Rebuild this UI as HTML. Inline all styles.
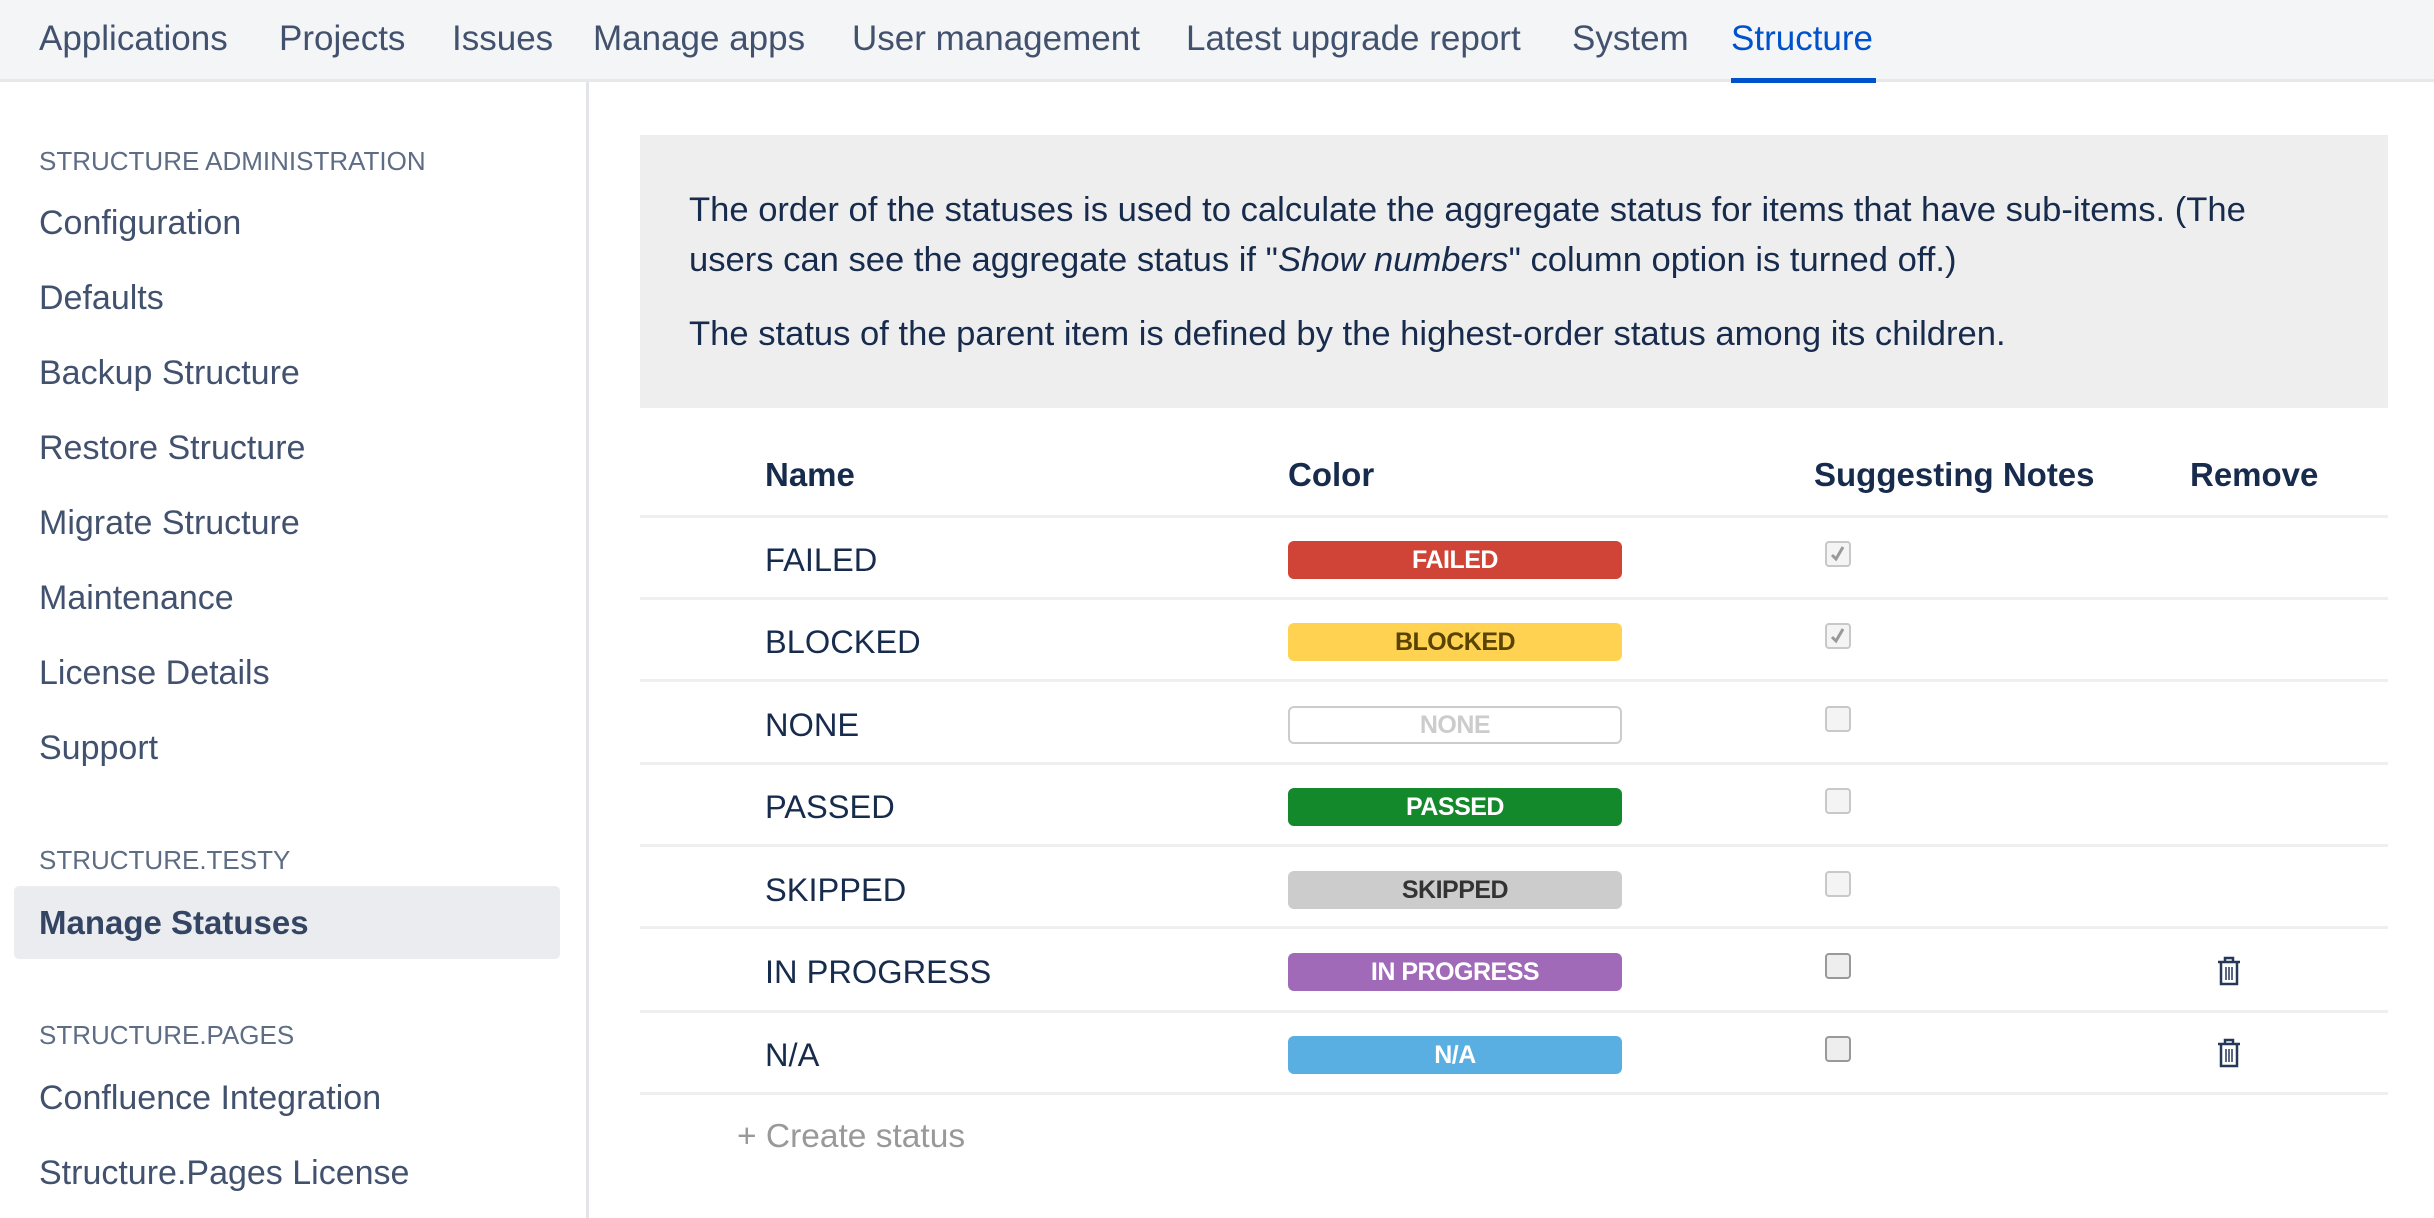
<!DOCTYPE html>
<html><head><meta charset="utf-8"><style>
*{margin:0;padding:0;box-sizing:border-box}
body{width:2434px;height:1218px;background:#fff;font-family:"Liberation Sans",sans-serif;position:relative;overflow:hidden;color:#172b4d}
.nav{position:absolute;left:0;top:0;width:2434px;height:82px;background:#f4f5f7;border-bottom:3px solid #e6e8ec}
.nav span{position:absolute;top:19px;font-size:35px;color:#42526e;white-space:nowrap}
.nav .act{color:#0052cc}
.uline{position:absolute;left:1731px;top:78px;width:145px;height:5px;background:#0052cc}
.side{position:absolute;left:586px;top:82px;width:3px;height:1136px;background:#e2e4e8}
.h{position:absolute;left:39px;font-size:26px;color:#5e6c84;white-space:nowrap}
.it{position:absolute;left:39px;font-size:34px;color:#42526e;white-space:nowrap}
.sel{position:absolute;left:14px;top:886px;width:546px;height:73px;background:#ebecf0;border-radius:5px}
.info{position:absolute;left:640px;top:135px;width:1748px;height:273px;background:#eeeeee}
.info p{position:absolute;left:49px;font-size:34.6px;color:#172b4d;white-space:nowrap}
.th{position:absolute;top:456px;font-size:33px;font-weight:bold;color:#172b4d;white-space:nowrap}
.ln{position:absolute;left:640px;width:1748px;height:3px;background:#efefef}
.nm{position:absolute;left:765px;font-size:32.6px;color:#172b4d;white-space:nowrap}
.bd{position:absolute;left:1288px;width:334px;height:38px;border-radius:6px;font-weight:bold;font-size:25px;text-align:center;line-height:38px;letter-spacing:-0.5px}
.cb{position:absolute;left:1825px;width:26px;height:26px;border:2px solid #c8c8c8;border-radius:4px;background:#f4f4f4}
.cb.d{border-color:#999;background:#eee}
.tr{position:absolute;left:2216px}
</style></head><body>
<div class="nav">
<span style="left:39px">Applications</span>
<span style="left:279px">Projects</span>
<span style="left:452px">Issues</span>
<span style="left:593px">Manage apps</span>
<span style="left:852px">User management</span>
<span style="left:1186px">Latest upgrade report</span>
<span style="left:1572px">System</span>
<span class="act" style="left:1731px">Structure</span>
<div class="uline"></div>
</div>
<div class="side"></div>
<div class="h" style="top:146px">STRUCTURE ADMINISTRATION</div>
<div class="it" style="top:204px">Configuration</div>
<div class="it" style="top:279px">Defaults</div>
<div class="it" style="top:354px">Backup Structure</div>
<div class="it" style="top:429px">Restore Structure</div>
<div class="it" style="top:504px">Migrate Structure</div>
<div class="it" style="top:579px">Maintenance</div>
<div class="it" style="top:654px">License Details</div>
<div class="it" style="top:729px">Support</div>
<div class="h" style="top:845px">STRUCTURE.TESTY</div>
<div class="sel"></div>
<div class="it" style="top:904px;color:#344563;font-weight:bold;font-size:33px">Manage Statuses</div>
<div class="h" style="top:1020px">STRUCTURE.PAGES</div>
<div class="it" style="top:1079px">Confluence Integration</div>
<div class="it" style="top:1154px">Structure.Pages License</div>

<div class="info">
<p style="top:56px">The order of the statuses is used to calculate the aggregate status for items that have sub-items. (The</p>
<p style="top:106px">users can see the aggregate status if "<i>Show numbers</i>" column option is turned off.)</p>
<p style="top:180px">The status of the parent item is defined by the highest-order status among its children.</p>
</div>

<div class="th" style="left:765px">Name</div>
<div class="th" style="left:1288px">Color</div>
<div class="th" style="left:1814px">Suggesting Notes</div>
<div class="th" style="left:2190px">Remove</div>

<div class="ln" style="top:515px"></div>
<div class="ln" style="top:597px"></div>
<div class="ln" style="top:679px"></div>
<div class="ln" style="top:762px"></div>
<div class="ln" style="top:844px"></div>
<div class="ln" style="top:926px"></div>
<div class="ln" style="top:1010px"></div>
<div class="ln" style="top:1092px"></div>

<div class="nm" style="top:541px">FAILED</div>
<div class="nm" style="top:623px">BLOCKED</div>
<div class="nm" style="top:706px">NONE</div>
<div class="nm" style="top:788px">PASSED</div>
<div class="nm" style="top:871px">SKIPPED</div>
<div class="nm" style="top:953px">IN PROGRESS</div>
<div class="nm" style="top:1036px">N/A</div>

<div class="bd" style="top:541px;background:#d04437;color:#fff">FAILED</div>
<div class="bd" style="top:623px;background:#ffd351;color:#594300">BLOCKED</div>
<div class="bd" style="top:706px;background:#fff;border:2px solid #ccc;color:#ccc;line-height:34px">NONE</div>
<div class="bd" style="top:788px;background:#14892c;color:#fff">PASSED</div>
<div class="bd" style="top:871px;background:#ccc;color:#333">SKIPPED</div>
<div class="bd" style="top:953px;background:#a06ab9;color:#fff">IN PROGRESS</div>
<div class="bd" style="top:1036px;background:#59afe1;color:#fff">N/A</div>

<div class="cb" style="top:541px"><svg width="22" height="22" viewBox="0 0 22 22" style="position:absolute;left:0;top:0"><path d="M5 12 L9 16 L16 4" stroke="#999" stroke-width="3" fill="none"/></svg></div>
<div class="cb" style="top:623px"><svg width="22" height="22" viewBox="0 0 22 22" style="position:absolute;left:0;top:0"><path d="M5 12 L9 16 L16 4" stroke="#999" stroke-width="3" fill="none"/></svg></div>
<div class="cb" style="top:706px"></div>
<div class="cb" style="top:788px"></div>
<div class="cb" style="top:871px"></div>
<div class="cb d" style="top:953px"></div>
<div class="cb d" style="top:1036px"></div>

<svg class="tr" style="top:956px" width="26" height="30" viewBox="0 0 26 30"><g stroke="#253858" stroke-width="2.5" fill="none"><path d="M2 6 H24"/><path d="M9 6 V2 H17 V6"/><path d="M5 6 V28 H21 V6"/><path d="M10 11 V24 M13 11 V24 M16 11 V24" stroke-width="1.5"/></g></svg>
<svg class="tr" style="top:1038px" width="26" height="30" viewBox="0 0 26 30"><g stroke="#253858" stroke-width="2.5" fill="none"><path d="M2 6 H24"/><path d="M9 6 V2 H17 V6"/><path d="M5 6 V28 H21 V6"/><path d="M10 11 V24 M13 11 V24 M16 11 V24" stroke-width="1.5"/></g></svg>

<div style="position:absolute;left:737px;top:1118px;font-size:33.5px;color:#999;white-space:nowrap">+ Create status</div>
</body></html>
